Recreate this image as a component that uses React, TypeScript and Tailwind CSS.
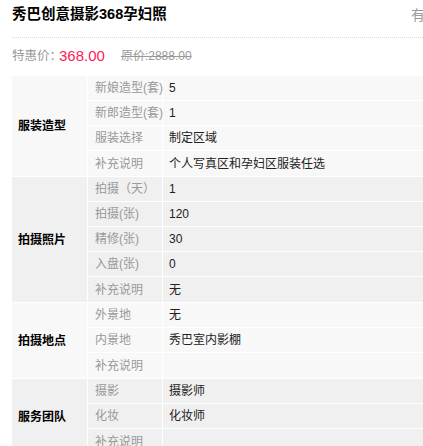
import React from "react";

type Row = { k: string; v: string };
type Group = { title: string; bg: string; rows: Row[] };

const groups: Group[] = [
  {
    title: "服装造型",
    bg: "bg-[#f8f8f8]",
    rows: [
      { k: "新娘造型(套)", v: "5" },
      { k: "新郎造型(套)", v: "1" },
      { k: "服装选择", v: "制定区域" },
      { k: "补充说明", v: "个人写真区和孕妇区服装任选" },
    ],
  },
  {
    title: "拍摄照片",
    bg: "bg-[#f0f0f0]",
    rows: [
      { k: "拍摄（天）", v: "1" },
      { k: "拍摄(张)", v: "120" },
      { k: "精修(张)", v: "30" },
      { k: "入盘(张)", v: "0" },
      { k: "补充说明", v: "无" },
    ],
  },
  {
    title: "拍摄地点",
    bg: "bg-[#f8f8f8]",
    rows: [
      { k: "外景地", v: "无" },
      { k: "内景地", v: "秀巴室内影棚" },
      { k: "补充说明", v: "" },
    ],
  },
  {
    title: "服务团队",
    bg: "bg-[#f0f0f0]",
    rows: [
      { k: "摄影", v: "摄影师" },
      { k: "化妆", v: "化妆师" },
      { k: "补充说明", v: "" },
    ],
  },
];

export default function App() {
  return (
    <div
      className="w-[423px] h-[446px] overflow-hidden bg-white pl-[12px]"
      style={{ fontFamily: '"Liberation Sans", "Noto Sans CJK SC", sans-serif' }}
    >
      <div className="h-[38px] border-b border-dotted border-[#d8d8d8]">
        <div className="h-[30px] flex items-center">
          <span className="text-[14.5px] font-bold text-black whitespace-nowrap">秀巴创意摄影368孕妇照</span>
          <span className="ml-auto mr-[-2px] text-[14px] text-[#999] whitespace-nowrap">有</span>
        </div>
      </div>
      <div className="h-[36px] mb-[2px] flex items-center whitespace-nowrap">
        <span className="text-[12.5px] text-[#999]">特惠价：</span>
        <span className="text-[15px] text-[#ff1a5a] ml-[-3px]">368.00</span>
        <span className="text-[12px] text-[#999] line-through ml-[16px]">原价:2888.00</span>
      </div>
      <div className="text-[12px]">
        {groups.map((g) => (
          <div key={g.title} className={`flex border-b border-white ${g.bg}`}>
            <div className="w-[76px] shrink-0 border-r border-white flex items-center pl-[6px] font-bold text-black">
              {g.title}
            </div>
            <div className="flex-1 flex flex-col">
              {g.rows.map((r, i) => (
                <div
                  key={i}
                  className={`flex h-[25px] ${i < g.rows.length - 1 ? "border-b border-white" : "h-[24px]"}`}
                >
                  <div className="w-[75px] shrink-0 border-r border-white flex items-center pl-[7px] text-[#999] whitespace-nowrap">
                    {r.k}
                  </div>
                  <div className="flex-1 flex items-center pl-[6px] text-[#222] whitespace-nowrap">{r.v}</div>
                </div>
              ))}
            </div>
          </div>
        ))}
      </div>
    </div>
  );
}
